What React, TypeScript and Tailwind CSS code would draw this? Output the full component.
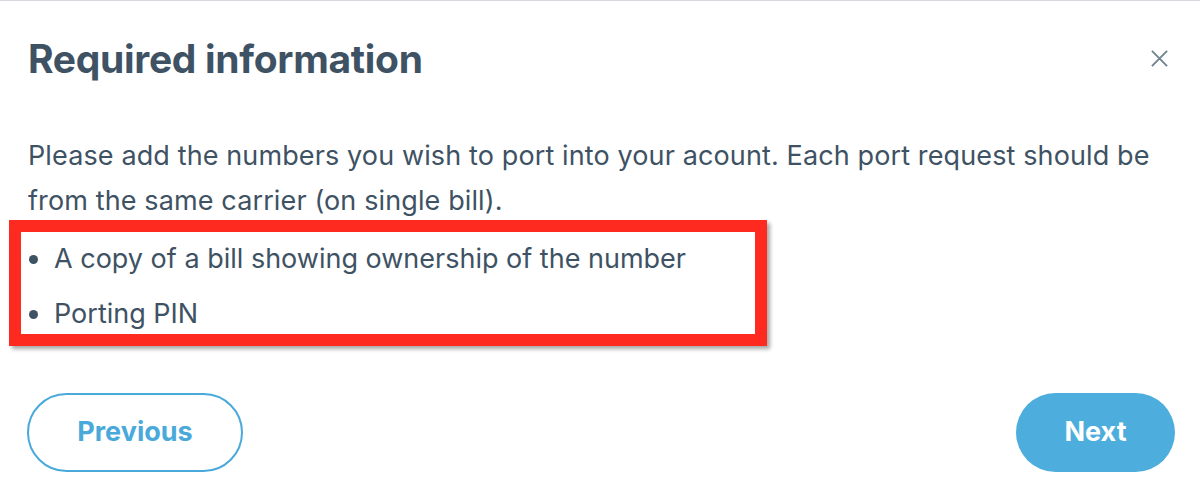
import React from "react";

export default function App() {
  return (
    <div
      className="w-[1200px] h-[502px] bg-white border-t border-[#d4d8dc] overflow-hidden text-[#3e5264]"
      style={{ fontFamily: "Inter, 'Noto Sans', sans-serif" }}
    >
      <div className="flex items-start justify-between pl-[28px] pr-[31px] pt-[34px]">
        <h1 className="text-[39px] font-bold leading-[48px] tracking-[-0.3px]">Required information</h1>
        <button className="mt-[14px] text-[#71838e]">
          <svg width="19" height="19" viewBox="0 0 20 20" fill="none" stroke="currentColor" strokeWidth="2">
            <path d="M2 2 L18 18 M18 2 L2 18" />
          </svg>
        </button>
      </div>
      <p className="pl-[28px] pr-[36px] mt-[50px] text-[27px] leading-[45px] tracking-[0.12px]">
        Please add the numbers you wish to port into your acount. Each port request should be from the same carrier (on single bill).
      </p>
      <div className="ml-[9px] mt-[-3px] w-[758px] border-[12px] border-[#ff2a1f] shadow-[3px_3px_4px_rgba(0,0,0,0.35)]">
        <ul className="h-[102px] pt-[2px] pl-[8px] text-[27px] leading-[50px] flex flex-col gap-[5px]">
          <li className="flex items-center gap-[16px]">
            <span className="w-[9px] h-[9px] rounded-full bg-[#3e5264]" />
            A copy of a bill showing ownership of the number
          </li>
          <li className="flex items-center gap-[16px]">
            <span className="w-[9px] h-[9px] rounded-full bg-[#3e5264]" />
            Porting PIN
          </li>
        </ul>
      </div>
      <div className="flex justify-between pl-[27px] pr-[25px] mt-[47px]">
        <button className="w-[216px] h-[79px] rounded-full border-2 border-[#4aa9db] text-[#4aa9db] text-[27px] font-bold">
          Previous
        </button>
        <button className="w-[159px] h-[79px] rounded-full bg-[#4daedd] text-white text-[27px] font-bold">
          Next
        </button>
      </div>
    </div>
  );
}
